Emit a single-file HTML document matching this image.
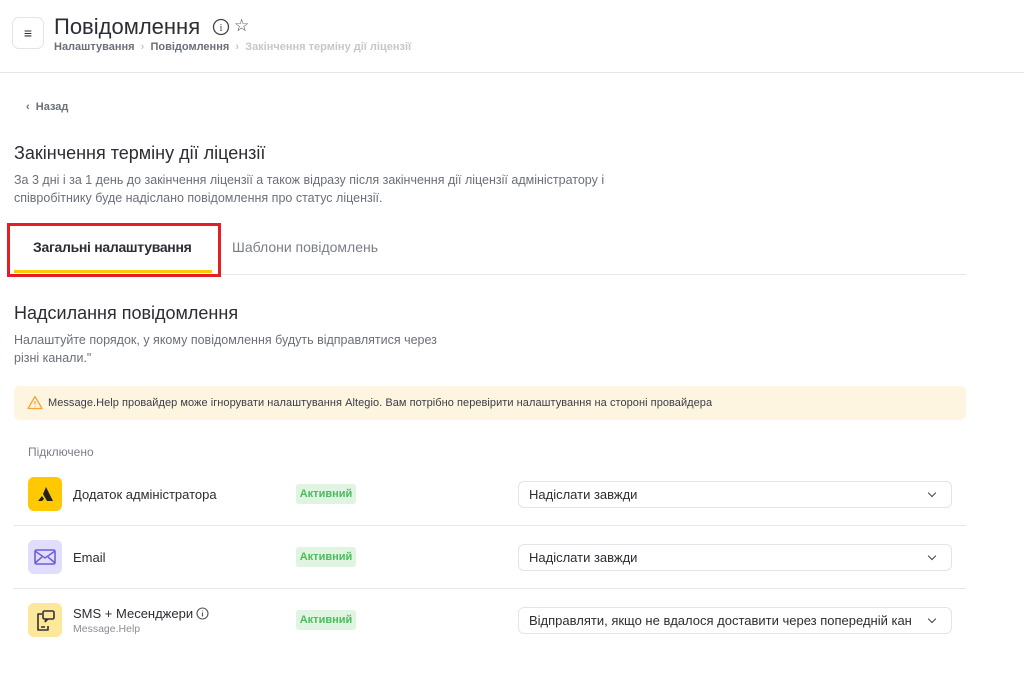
<!DOCTYPE html>
<html><head><meta charset="utf-8"><style>
*{box-sizing:border-box;margin:0;padding:0}
body{width:1024px;height:674px;background:#fff;font-family:"Liberation Sans","DejaVu Sans",sans-serif;color:#2b2d33;position:relative;overflow:hidden}
.a{position:absolute;white-space:nowrap}
.menu{left:12px;top:17px;width:32px;height:32px;border:1px solid #e3e4ea;border-radius:7px;display:flex;align-items:center;justify-content:center;font-size:14px;font-weight:bold}
.sel{left:518px;width:434px;height:27px;border:1px solid #e3e4ea;border-radius:6px;font-size:13px;padding:5px 10px;color:#2b2d33;overflow:hidden}
.sel:after{content:"";position:absolute;right:16px;top:8px;width:5px;height:5px;border-right:1.5px solid #444;border-bottom:1.5px solid #444;transform:rotate(45deg)}
.badge{left:296px;width:60px;height:20px;background:#dff5e1;color:#4dbb5c;font-size:11px;font-weight:bold;border-radius:3px;text-align:center;line-height:20px}
.ic{left:28px;width:34px;height:34px;border-radius:6px}
.hr{height:1px;background:#e6e7ed}
</style></head><body>
<div class="a menu">≡</div>
<div class="a" style="left:54px;top:14px;font-size:22px;color:#2b2d33">Повідомлення</div>
<svg class="a" style="left:212px;top:18px" width="18" height="18" viewBox="0 0 18 18"><circle cx="9" cy="9" r="7.5" fill="none" stroke="#444" stroke-width="1.3"/><text x="9" y="13" font-size="10" text-anchor="middle" font-family="Liberation Serif" fill="#444">i</text></svg>
<div class="a" style="left:234px;top:16px;font-size:17px;color:#444">☆</div>
<div class="a" style="left:54px;top:41px;font-size:11px;font-weight:bold;color:#6b6f7a">Налаштування &nbsp;<span style="color:#c5c7cf">›</span>&nbsp; Повідомлення &nbsp;<span style="color:#c5c7cf">›</span>&nbsp; <span style="color:#c5c7cf">Закінчення терміну дії ліцензії</span></div>
<div class="a hr" style="left:0;top:72px;width:1024px"></div>
<div class="a" style="left:26px;top:101px;font-size:11px;font-weight:bold;color:#6b6f7a">‹ &nbsp;Назад</div>
<div class="a" style="left:14px;top:143px;font-size:18px">Закінчення терміну дії ліцензії</div>
<div class="a" style="left:14px;top:171px;font-size:12.5px;line-height:18px;color:#6b6f7a">За 3 дні і за 1 день до закінчення ліцензії а також відразу після закінчення дії ліцензії адміністратору і<br>співробітнику буде надіслано повідомлення про статус ліцензії.</div>
<div class="a hr" style="left:14px;top:274px;width:952px"></div>
<div class="a" style="left:14px;top:270px;width:198px;height:3px;background:#ffc800"></div>
<div class="a" style="left:33px;top:239px;font-size:14px;color:#2b2d33;font-weight:bold;letter-spacing:-0.3px">Загальні налаштування</div>
<div class="a" style="left:232px;top:239px;font-size:14px;color:#7a7e88">Шаблони повідомлень</div>
<div class="a" style="left:7px;top:223px;width:214px;height:54px;border:3px solid #e31e24"></div>
<div class="a" style="left:14px;top:303px;font-size:18px">Надсилання повідомлення</div>
<div class="a" style="left:14px;top:331px;font-size:12.5px;line-height:18px;color:#6b6f7a">Налаштуйте порядок, у якому повідомлення будуть відправлятися через<br>різні канали."</div>
<div class="a" style="left:14px;top:386px;width:952px;height:34px;background:#fdf5e0;border-radius:6px"></div>
<svg class="a" style="left:27px;top:395px" width="16" height="15" viewBox="0 0 16 15"><path d="M8 1.5L15 13.5H1Z" fill="none" stroke="#f3a53a" stroke-width="1.3" stroke-linejoin="round"/><path d="M8 6v3.5M8 11v.8" stroke="#f3a53a" stroke-width="1.3"/></svg>
<div class="a" style="left:48px;top:397px;font-size:11px;color:#3a3d45;letter-spacing:0.05px">Message.Help провайдер може ігнорувати налаштування Altegio. Вам потрібно перевірити налаштування на стороні провайдера</div>
<div class="a" style="left:28px;top:445px;font-size:12px;color:#7a7e88">Підключено</div>

<div class="a ic" style="top:477px;background:#ffc800"><svg width="34" height="34"><path d="M18 10L25 24H19L15 17Z M10 24L14 19L16 22L14 24Z" fill="#222"/></svg></div>
<div class="a" style="left:73px;top:487px;font-size:13px">Додаток адміністратора</div>
<div class="a badge" style="top:484px">Активний</div>
<div class="a sel" style="top:481px">Надіслати завжди</div>
<div class="a hr" style="left:14px;top:525px;width:952px"></div>

<div class="a ic" style="top:540px;background:#e0defc"><svg width="34" height="34"><rect x="7" y="10" width="20" height="14" rx="1.5" fill="none" stroke="#6a5fd6" stroke-width="1.6"/><path d="M7 11l10 7 10-7M7 23l7-6M27 23l-7-6" fill="none" stroke="#6a5fd6" stroke-width="1.5"/></svg></div>
<div class="a" style="left:73px;top:550px;font-size:13px">Email</div>
<div class="a badge" style="top:547px">Активний</div>
<div class="a sel" style="top:544px">Надіслати завжди</div>
<div class="a hr" style="left:14px;top:588px;width:952px"></div>

<div class="a ic" style="top:603px;background:#fde79a"><svg width="34" height="34"><path d="M14 11H10v16h10v-4" fill="none" stroke="#333" stroke-width="1.6" stroke-linejoin="round"/><rect x="15" y="8" width="11" height="8" rx="1.5" fill="none" stroke="#333" stroke-width="1.6"/><path d="M18 16l-1 3 3-3M13 24h4" stroke="#333" stroke-width="1.5" fill="none"/></svg></div>
<div class="a" style="left:73px;top:606px;font-size:13px">SMS + Месенджери</div>
<svg class="a" style="left:196px;top:607px" width="13" height="13"><circle cx="6.5" cy="6.5" r="5.5" fill="none" stroke="#555" stroke-width="1.1"/><path d="M6.5 5.5v4M6.5 3.5v.8" stroke="#555" stroke-width="1.2"/></svg>
<div class="a" style="left:73px;top:623px;font-size:10.5px;color:#8a8e98">Message.Help</div>
<div class="a badge" style="top:610px">Активний</div>
<div class="a sel" style="top:607px;padding-right:40px">Відправляти, якщо не вдалося доставити через попередній кан</div>
</body></html>
